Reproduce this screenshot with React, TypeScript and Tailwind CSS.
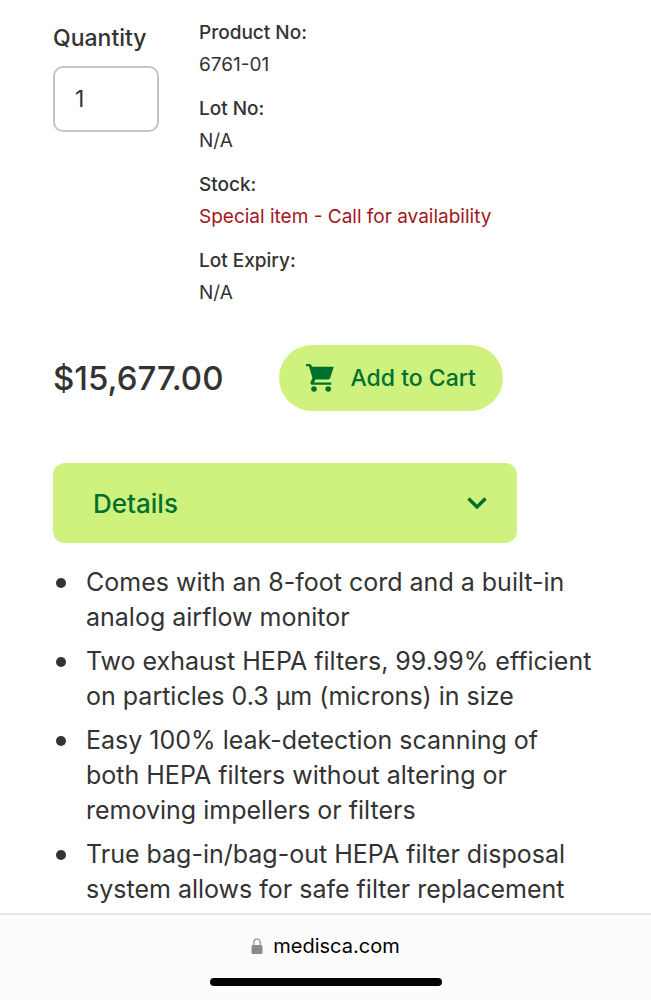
import React from 'react';

const SPECS = [
  { label: 'Product No:', value: '6761-01' },
  { label: 'Lot No:', value: 'N/A' },
  { label: 'Stock:', value: 'Special item - Call for availability', alert: true },
  { label: 'Lot Expiry:', value: 'N/A' },
];

const FEATURES = [
  'Comes with an 8-foot cord and a built-in analog airflow monitor',
  'Two exhaust HEPA filters, 99.99% efficient on particles 0.3 µm (microns) in size',
  'Easy 100% leak-detection scanning of both HEPA filters without altering or removing impellers or filters',
  'True bag-in/bag-out HEPA filter disposal system allows for safe filter replacement',
];

const CartIcon: React.FC = () => (
  <svg viewBox="0 0 28 28" className="h-7 w-7" fill="currentColor" aria-hidden="true">
    <path d="M0 0h3.8c.7 0 1.200.400 1.500 1l.7 1.700h21.800L24.200 14c-.3.900-1 1.400-2 1.400H9.400L8 18.500h17.300v2.300H6.300c-1.500 0-2.300-1.500-1.700-2.800l1.900-4L2.900 2.300H0z" />
    <circle cx="8" cy="25" r="2.800" />
    <circle cx="22.200" cy="25" r="2.800" />
  </svg>
);

const ProductInfo: React.FC = () => (
  <div className="flex items-start gap-10">
    <div className="flex w-[106px] shrink-0 flex-col gap-3 pt-[5px]">
      <label htmlFor="quantity" className="text-[23px] leading-8 font-medium">
        Quantity
      </label>
      <input
        id="quantity"
        type="text"
        inputMode="numeric"
        defaultValue="1"
        className="h-[66px] w-full rounded-[10px] border-2 border-[#c4c4c4] bg-white px-5 text-[23px]"
      />
    </div>

    <dl className="flex flex-col gap-3 text-[19px] leading-8">
      {SPECS.map((spec) => (
        <div key={spec.label}>
          <dt className="font-medium">{spec.label}</dt>
          <dd className={spec.alert ? 'text-[#a3141b]' : ''}>{spec.value}</dd>
        </div>
      ))}
    </dl>
  </div>
);

const BrowserBar: React.FC = () => (
  <footer className="sticky bottom-0 flex h-[87px] flex-col items-center justify-between border-t-2 border-[#e6e6e6] bg-[#fcfcfc] pt-[15px] pb-3.5 font-['Inter',sans-serif] text-black">
    <a href="https://medisca.com" className="flex items-center gap-2.5 text-[20px] leading-8">
      <svg viewBox="0 0 12 16" className="h-4 w-3 text-[#8a8a8e]" aria-hidden="true">
        <path d="M2.800 8V4.600a3.200 3.600 0 0 1 6.400 0V8" fill="none" stroke="currentColor" strokeWidth="1.200" />
        <rect x="0.500" y="7" width="11" height="9" rx="1.500" fill="currentColor" />
      </svg>
      medisca.com
    </a>
    {/* Home indicator */}
    <div className="h-2 w-[232px] rounded-full bg-black" />
  </footer>
);

const App: React.FC = () => {
  return (
    <div className="flex min-h-screen flex-col bg-white font-['Inter',sans-serif] text-[#333333]">
      <main className="flex-1 px-[53px] pt-[17px]">
        <ProductInfo />

        <div className="mt-9 flex items-center gap-14">
          <p className="text-[33px] leading-10 font-medium">$15,677.00</p>
          <button
            type="button"
            className="flex h-[66px] items-center gap-4 rounded-full bg-[#cff17d] px-[27px] text-[23px] font-medium text-[#00702e]"
          >
            <CartIcon />
            Add to Cart
          </button>
        </div>

        <button
          type="button"
          aria-expanded="true"
          className="mt-[52px] flex h-20 w-full max-w-[464px] items-center justify-between rounded-xl bg-[#cff17d] pr-[30px] pl-10 text-[26px] font-medium text-[#00702e]"
        >
          Details
          <svg viewBox="0 0 20 12" className="h-3 w-5" fill="none" aria-hidden="true">
            <path d="M1.500 1.500 10 10l8.500-8.500" stroke="currentColor" strokeWidth="3.400" />
          </svg>
        </button>

        <ul className="mt-[22px] flex flex-col gap-[9px] text-[25px] leading-[35px]">
          {FEATURES.map((feature) => (
            <li key={feature} className="flex gap-5 pl-[3px]">
              <span className="mt-[13px] h-2.5 w-2.5 shrink-0 rounded-full bg-[#333333]" />
              <span>{feature}</span>
            </li>
          ))}
        </ul>
      </main>
      <BrowserBar />
    </div>
  );
};

export default App;
